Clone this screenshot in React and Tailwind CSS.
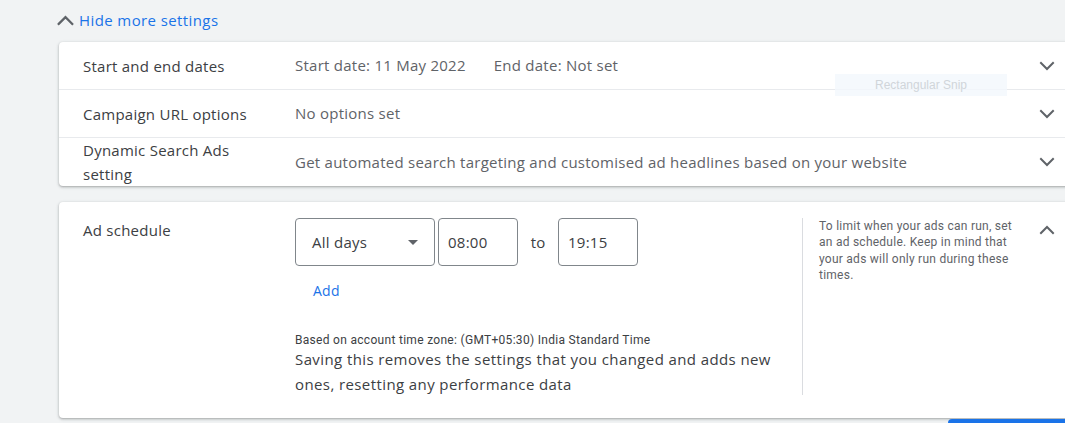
import React from 'react';

const Chevron = ({ up = false, className = '' }) => (
  <svg width="24" height="24" viewBox="0 0 24 24" className={className}>
    <path
      d={up ? 'M6 15l6-6 6 6' : 'M6 9l6 6 6-6'}
      fill="none"
      stroke="#5f6368"
      strokeWidth="2"
      strokeLinecap="square"
    />
  </svg>
);

const Row = ({ label, value, last }) => (
  <div className={`flex items-center h-12 ${last ? '' : 'border-b border-[#e8eaed]'}`}>
    <div className="w-[236px] pl-6 pr-4 text-[15px] leading-6 tracking-[0.25px] text-[#3c4043]">{label}</div>
    <div className="flex-1 text-[15px] tracking-[0.25px] text-[#5f6368]">{value}</div>
    <Chevron className="mr-[20px]" />
  </div>
);

const App = () => {
  return (
    <div className="relative w-[1065px] h-[423px] overflow-hidden bg-[#f1f3f4]" style={{ fontFamily: '"Open Sans", Roboto, sans-serif' }}>
      <div className="flex items-center pl-[52px] h-[42px] pb-[2px]">
        <Chevron up className="w-[27px] h-[27px]" />
        <span className="text-[15px] tracking-[0.4px] text-[#1a73e8]">Hide more settings</span>
      </div>

      <div className="ml-[59px] w-[1020px] bg-white rounded-l-[4px] shadow-[0_1px_2px_rgba(60,64,67,0.3),0_1px_3px_1px_rgba(60,64,67,0.12)]">
        <Row label="Start and end dates" value={<span>Start date: 11 May 2022<span className="ml-7">End date: Not set</span></span>} />
        <Row label="Campaign URL options" value="No options set" />
        <Row label="Dynamic Search Ads setting" value="Get automated search targeting and customised ad headlines based on your website" last />
      </div>

      <div className="mt-4 ml-[59px] w-[1020px] h-[216px] bg-white rounded-l-[4px] shadow-[0_1px_2px_rgba(60,64,67,0.3),0_1px_3px_1px_rgba(60,64,67,0.12)] flex pt-4">
        <div className="w-[236px] pl-6 text-[15px] leading-6 tracking-[0.25px] text-[#3c4043]">Ad schedule</div>
        <div className="w-[507px] text-[#3c4043]">
          <div className="flex items-center">
            <div className="w-[140px] h-12 border border-[#80868b] rounded-[4px] flex items-center justify-between pl-4 pr-4 text-[15px] tracking-[0.25px]">
              <span>All days</span>
              <svg width="10" height="5" viewBox="0 0 10 5"><path d="M0 0h10L5 5z" fill="#5f6368" /></svg>
            </div>
            <div className="ml-[3px] w-[80px] h-12 border border-[#80868b] rounded-[4px] flex items-center pl-[9px] text-[15px] tracking-[0.25px]">08:00</div>
            <div className="w-[40px] text-center text-[15px]">to</div>
            <div className="w-[80px] h-12 border border-[#80868b] rounded-[4px] flex items-center pl-[9px] text-[15px] tracking-[0.25px]">19:15</div>
          </div>
          <div className="mt-[14px] pl-[18px] text-[14px] tracking-[0.25px] text-[#1a73e8]">Add</div>
          <div className="mt-[31px] text-[12px] leading-4 tracking-[0.3px] text-[#3c4043]" style={{ fontFamily: 'Roboto, sans-serif' }}>Based on account time zone: (GMT+05:30) India Standard Time</div>
          <div className="-mt-[1px] text-[15px] leading-[25px] tracking-[0.4px] text-[#3c4043] w-[496px]">Saving this removes the settings that you changed and adds new ones, resetting any performance data</div>
        </div>
        <div className="h-[177px] border-l border-[#dadce0] pl-4 pr-2 w-[222px] text-[12px] leading-[16.3px] tracking-[0.25px] text-[#5f6368]" style={{ fontFamily: 'Roboto, sans-serif' }}>
          To limit when your ads can run, set an ad schedule. Keep in mind that your ads will only run during these times.
        </div>
        <Chevron up className="ml-[11px]" />
      </div>

      <div className="absolute left-[835px] top-[74px] w-[172px] h-[22px] bg-[#f3f8fd]/80 flex items-center justify-center text-[12px] text-[#d0d5da]" style={{ fontFamily: '"Liberation Sans", sans-serif' }}>Rectangular Snip</div>
      <div className="absolute left-[948px] top-[419px] w-[117px] h-[4px] bg-[#1a73e8] rounded-tl-[4px]" />
    </div>
  );
};

export default App;
